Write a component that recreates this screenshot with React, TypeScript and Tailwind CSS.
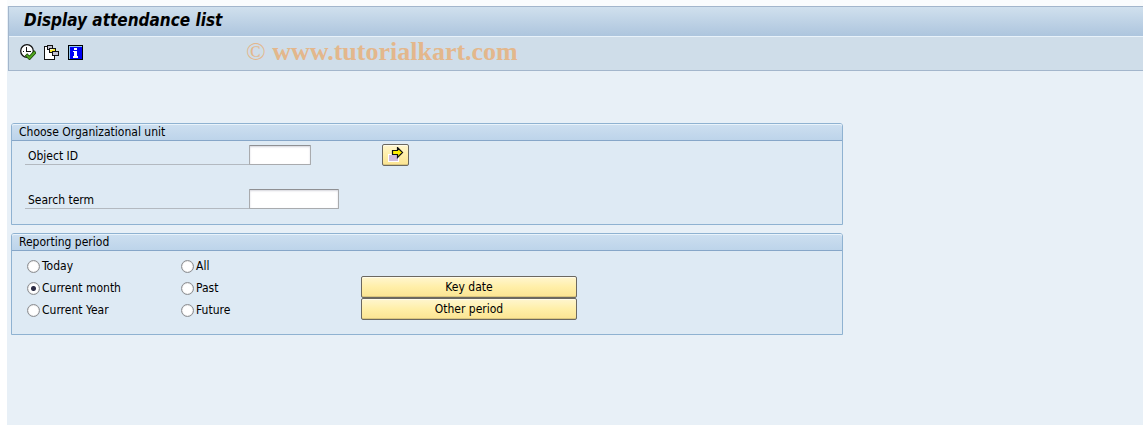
import { useId, useState } from "react";
import type { ReactNode } from "react";

const ExecuteIcon = () => (
  <svg width="16" height="16" viewBox="0 0 16 16" aria-hidden="true">
    <circle cx="7" cy="7" r="6.3" fill="#fff" stroke="#111" strokeWidth="1.3" />
    <path d="M6.5 3v5M6 7.5h5M3 7.500h1M6.500 11v1" fill="none" stroke="#111" />
    <path d="M6 10.500l3.500 3.500 6-6.500" fill="none" stroke="#173d08" strokeWidth="3.400" />
    <path d="M6.500 11l3 3 5.500-6" fill="none" stroke="#4fa51e" strokeWidth="2" />
  </svg>
);

const VariantIcon = () => (
  <svg width="16" height="16" viewBox="0 0 16 16" shapeRendering="crispEdges" aria-hidden="true">
    <path d="M.5 2.500h10v13H.5z" fill="#fff" stroke="#111" />
    <path d="M6 1h6v5H6z" fill="#cfdde9" />
    <path d="M3.500 1.500h5v4h-5z" fill="#c3c3d3" stroke="#111" />
    <path d="M5.500 4.500h6v4h-6z" fill="#f7e92c" stroke="#111" />
    <path d="M6 5h3v1H6z" fill="#fffbc0" />
    <path d="M8.500 7.500h6v4h-6z" fill="#c3c3d3" stroke="#111" />
  </svg>
);

const InfoIcon = () => (
  <svg width="16" height="16" viewBox="0 0 16 16" shapeRendering="crispEdges" aria-hidden="true">
    <path d="M0 1h15v15H0z" fill="#000" />
    <path d="M1 2h13v13H1z" fill="#0000f5" />
    <path d="M1 2h13v1H1zM1 2h1v13H1z" fill="#8fc4f0" />
    <path d="M6 4h3v2H6zM5 7h4v5h1v2H5v-2h1V8H5z" fill="#fff" />
  </svg>
);

const ArrowIcon = () => (
  <svg width="16" height="16" viewBox="0 0 16 16" aria-hidden="true">
    <path d="M0 7h11v8H0z" fill="#fff" />
    <path d="M1 8h9v6H1z" fill="#cfbbdc" />
    <path d="M4.500 3.500h5v-3l5 5-5 5v-3h-5z" fill="#ffee00" stroke="#111" strokeWidth="1.200" />
  </svg>
);

const Group = ({ title, children }: { title: string; children: ReactNode }) => {
  const titleId = useId();

  return (
    <section
      aria-labelledby={titleId}
      className="w-full max-w-[832px] rounded-t-[3px] border border-[#8fb2d1] bg-[#deeaf4]"
    >
      <h2
        id={titleId}
        className="h-[17px] px-[7px] leading-4 rounded-t-[2px] border-b border-[#86a6c8] bg-linear-to-b from-[#cddff0] to-[#bdd4ea] shadow-[inset_0_1px_0_#e9f3fb]"
      >
        {title}
      </h2>
      {children}
    </section>
  );
};

const Field = ({ id, label, width }: { id: string; label: string; width: string }) => (
  <div className="flex h-5 items-stretch">
    <label htmlFor={id} className="w-56 shrink-0 border-b border-[#b3b9c0] pl-[3px] leading-[22px]">
      {label}
    </label>
    <input
      id={id}
      type="text"
      className={`${width} rounded-[1px] border border-[#a9abae] border-t-[#8f9093] bg-white px-1 outline-none shadow-[inset_0_1px_2px_#d5d5dc]`}
    />
  </div>
);

const periods = [
  ["Today", "All"],
  ["Current month", "Past"],
  ["Current Year", "Future"],
];

const buttonStyle =
  "rounded-[2px] border border-[#6b6860] bg-linear-to-b from-[#fff6cf] via-[#ffefa8] to-[#fbe492] shadow-[inset_0_1px_0_#fffbe8,inset_0_-1px_0_#d9c67f]";

const App = () => {
  const [period, setPeriod] = useState("Current month");

  return (
    <div className="min-h-screen bg-white pl-[7px] font-['DejaVu_Sans_Condensed','DejaVu_Sans',sans-serif] text-[12px] text-black">
      <div className="min-h-screen bg-[#e8f0f7]">
        <div className="h-1.5 bg-[#fafcfd]" />
        <header className="ml-px border border-r-0 border-[#a3b6cc] bg-[#cfdde9]">
          <h1 className="h-[30px] border-b border-[#e8f2fa] bg-linear-to-b from-[#d0e0ed] to-[#adc5de] pl-[15px] text-[17px] leading-[26px] font-bold italic">
            Display attendance list
          </h1>
          <div className="flex h-[33px] items-center pb-1 pl-[11px]">
            <div className="flex gap-2">
              <button type="button" aria-label="Execute">
                <ExecuteIcon />
              </button>
              <button type="button" aria-label="Get variant">
                <VariantIcon />
              </button>
              <button type="button" aria-label="Information">
                <InfoIcon />
              </button>
            </div>
            <p className="ml-[162px] font-['Liberation_Serif',serif] text-[26px] leading-7 font-bold text-[#e3b78c]">
              <span className="font-normal">©</span> www.tutorialkart.com
            </p>
          </div>
        </header>

        <main className="flex flex-col gap-2 pt-[52px] pl-1">
          <Group title="Choose Organizational unit">
            <div className="flex pt-[3px] pb-[15px] pl-[13px]">
              <div className="flex w-[357px] flex-col gap-6 pt-px">
                <Field id="object-id" label="Object ID" width="w-[62px]" />
                <Field id="search-term" label="Search term" width="w-[90px]" />
              </div>
              <button
                type="button"
                aria-label="Multiple selection"
                className={`${buttonStyle} flex h-[22px] w-[27px] items-center justify-center`}
              >
                <ArrowIcon />
              </button>
            </div>
          </Group>

          <Group title="Reporting period">
            <div className="flex pt-1 pb-[13px] pl-[15px]">
              <div role="radiogroup" aria-label="Period" className="w-[334px]">
                {periods.map((row) => (
                  <div key={row[0]} className="grid grid-cols-[154px_1fr]">
                    {row.map((name) => (
                      <label key={name} className="flex h-[22px] items-center gap-0.5">
                        <input
                          type="radio"
                          name="period"
                          value={name}
                          checked={period === name}
                          onChange={() => setPeriod(name)}
                          className="size-[13px] appearance-none rounded-full border border-[#8b8d91] bg-white shadow-[inset_0_0_1px_#999] checked:bg-radial checked:from-[#2d2d45] checked:from-[2px] checked:to-white checked:to-[3px]"
                        />
                        {name}
                      </label>
                    ))}
                  </div>
                ))}
              </div>
              <div className="flex w-[216px] flex-col pt-[21px]">
                <button type="button" className={`${buttonStyle} h-[22px]`}>
                  Key date
                </button>
                <button type="button" className={`${buttonStyle} h-[22px]`}>
                  Other period
                </button>
              </div>
            </div>
          </Group>
        </main>
      </div>
    </div>
  );
};

export default App;
